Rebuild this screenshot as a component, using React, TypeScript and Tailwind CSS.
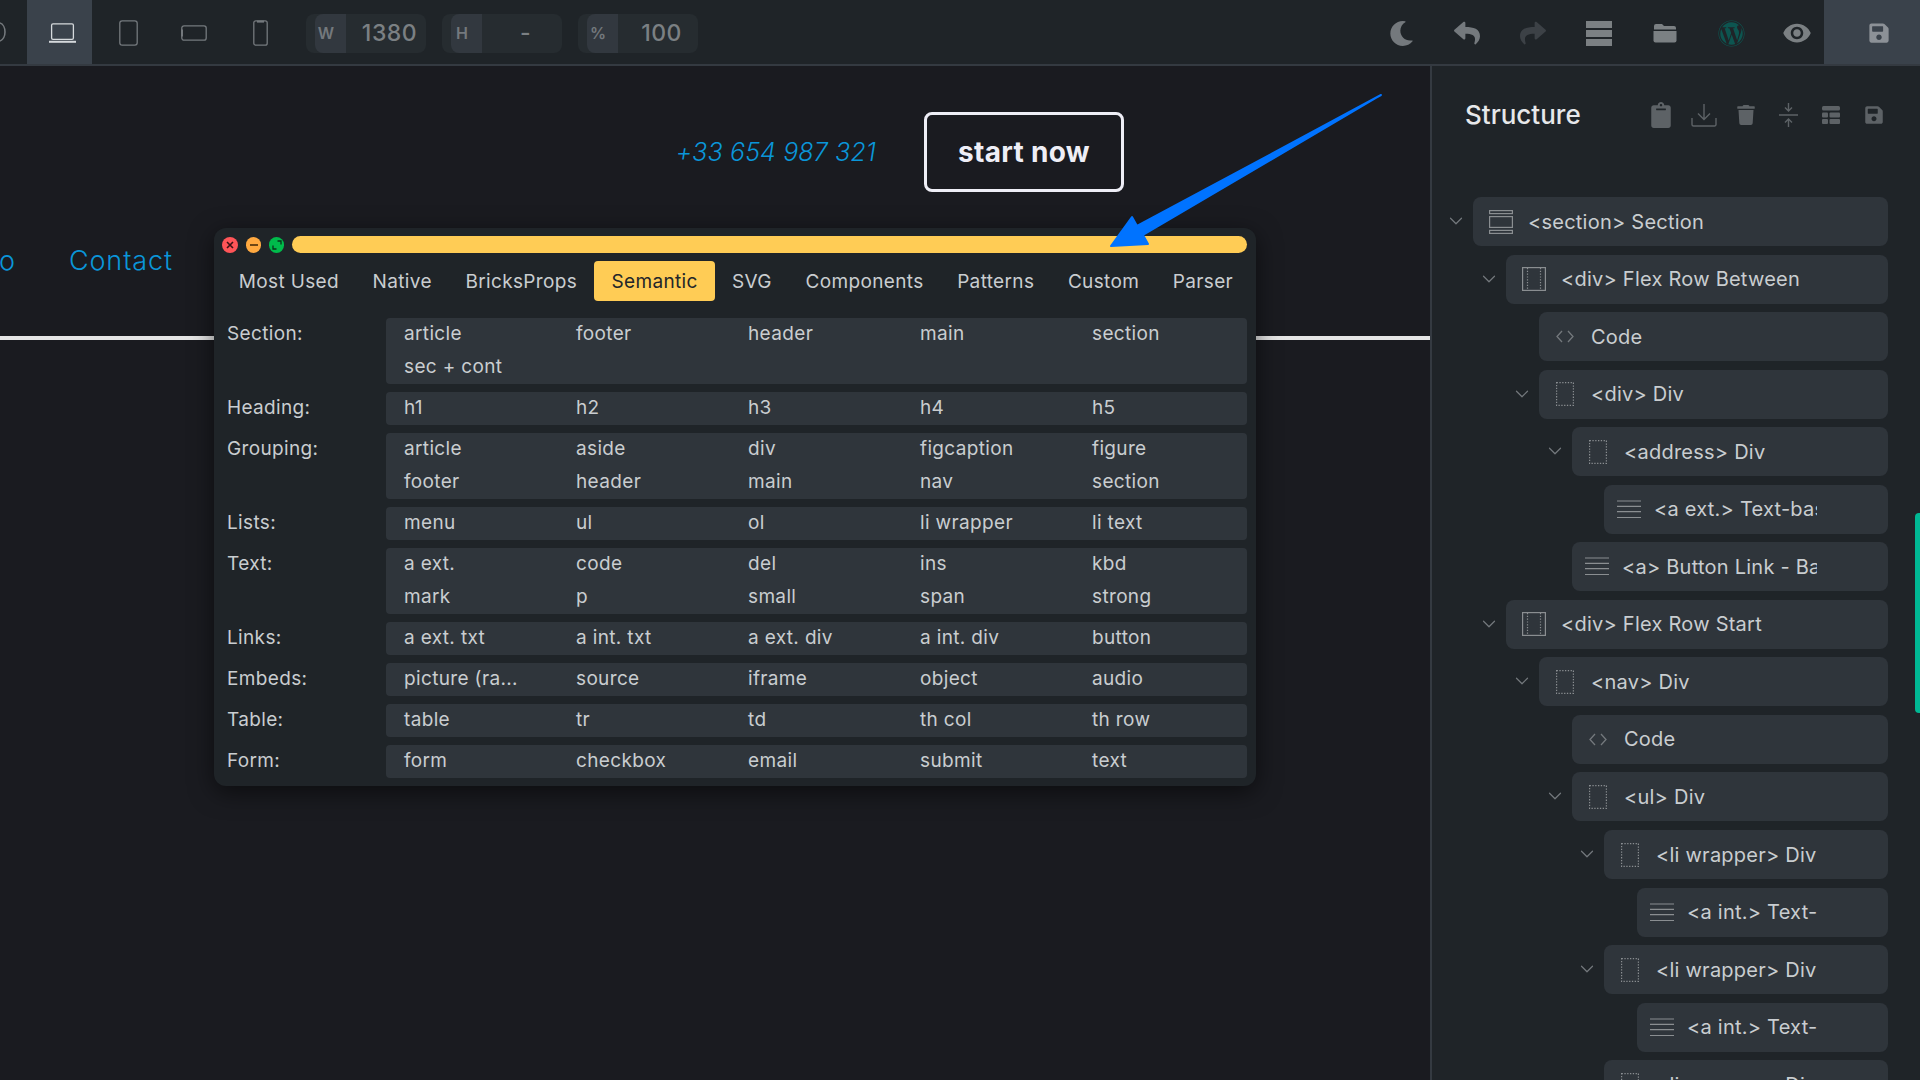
import { ChevronDown } from 'lucide-react';
import { FaMoon, FaReply, FaShare, FaWordpress, FaClipboard, FaTrash, FaSave } from 'react-icons/fa';
import { MdVisibility } from 'react-icons/md';

const FONT = "font-['Inter','Liberation_Sans',sans-serif]";

const TABS = ['Most Used', 'Native', 'BricksProps', 'Semantic', 'SVG', 'Components', 'Patterns', 'Custom', 'Parser'];

const GROUPS: { label: string; items: string[] }[] = [
  { label: 'Section:', items: ['article', 'footer', 'header', 'main', 'section', 'sec + cont'] },
  { label: 'Heading:', items: ['h1', 'h2', 'h3', 'h4', 'h5'] },
  { label: 'Grouping:', items: ['article', 'aside', 'div', 'figcaption', 'figure', 'footer', 'header', 'main', 'nav', 'section'] },
  { label: 'Lists:', items: ['menu', 'ul', 'ol', 'li wrapper', 'li text'] },
  { label: 'Text:', items: ['a ext.', 'code', 'del', 'ins', 'kbd', 'mark', 'p', 'small', 'span', 'strong'] },
  { label: 'Links:', items: ['a ext. txt', 'a int. txt', 'a ext. div', 'a int. div', 'button'] },
  { label: 'Embeds:', items: ['picture (ra...', 'source', 'iframe', 'object', 'audio'] },
  { label: 'Table:', items: ['table', 'tr', 'td', 'th col', 'th row'] },
  { label: 'Form:', items: ['form', 'checkbox', 'email', 'submit', 'text'] },
];

type RowIcon = 'section' | 'flex' | 'code' | 'div' | 'text';

const TREE: { level: number; icon: RowIcon; text: string; open?: boolean }[] = [
  { level: 0, icon: 'section', text: '<section> Section', open: true },
  { level: 1, icon: 'flex', text: '<div> Flex Row Between', open: true },
  { level: 2, icon: 'code', text: 'Code' },
  { level: 2, icon: 'div', text: '<div> Div', open: true },
  { level: 3, icon: 'div', text: '<address> Div', open: true },
  { level: 4, icon: 'text', text: '<a ext.> Text-basic' },
  { level: 3, icon: 'text', text: '<a> Button Link - Basic' },
  { level: 1, icon: 'flex', text: '<div> Flex Row Start', open: true },
  { level: 2, icon: 'div', text: '<nav> Div', open: true },
  { level: 3, icon: 'code', text: 'Code' },
  { level: 3, icon: 'div', text: '<ul> Div', open: true },
  { level: 4, icon: 'div', text: '<li wrapper> Div', open: true },
  { level: 5, icon: 'text', text: '<a int.> Text-basic' },
  { level: 4, icon: 'div', text: '<li wrapper> Div', open: true },
  { level: 5, icon: 'text', text: '<a int.> Text-basic' },
  { level: 4, icon: 'div', text: '<li wrapper> Div', open: true },
];

// indent per tree level, read off the reference
const INDENT = ['ml-0', 'ml-[33px]', 'ml-[66px]', 'ml-[99px]', 'ml-[131px]', 'ml-[164px]'];

// icon slot differs per element type
const ICON_SLOT: Record<RowIcon, string> = {
  section: 'w-[55px] pl-[16px]',
  flex: 'w-[55px] pl-[16px]',
  code: 'w-[52px] pl-[17px]',
  div: 'w-[52px] pl-[17px]',
  text: 'w-[50px] pl-[13px]',
};

function DeviceIcon({ kind }: { kind: 'laptop' | 'tablet' | 'landscape' | 'phone' }) {
  if (kind === 'laptop') {
    return (
      <svg width="27" height="20" viewBox="0 0 27 20" fill="none" stroke="#d5d9dc" strokeWidth="1.3">
        <rect x="2.6" y="0.8" width="21.8" height="15.6" rx="1.4" />
        <path d="M0 18.8h27" strokeWidth="2" />
      </svg>
    );
  }
  if (kind === 'tablet') {
    return (
      <svg width="19" height="26" viewBox="0 0 19 26" fill="none" stroke="#74797d" strokeWidth="1.3">
        <rect x="0.8" y="0.8" width="17.4" height="24.4" rx="2.4" />
      </svg>
    );
  }
  if (kind === 'landscape') {
    return (
      <svg width="26" height="16" viewBox="0 0 26 16" fill="none" stroke="#74797d" strokeWidth="1.3">
        <rect x="0.8" y="0.8" width="24.4" height="14.4" rx="2.2" />
        <path d="M1 4.500v7" strokeWidth="2" />
      </svg>
    );
  }
  return (
    <svg width="15" height="26" viewBox="0 0 15 26" fill="none" stroke="#74797d" strokeWidth="1.3">
      <rect x="0.8" y="0.8" width="13.4" height="24.4" rx="2" />
      <path d="M4 1.600h7" strokeWidth="2" />
    </svg>
  );
}

function SizeField({ label, value }: { label: string; value: string }) {
  return (
    <div className="flex h-[39px] w-[120px] rounded-lg bg-[#262c30] pl-[9px]">
      <span className="flex w-[31px] items-center justify-center rounded-l-lg bg-[#32383f] pr-[9px] text-[16px] font-semibold text-[#74797d]">{label}</span>
      <span className="flex flex-1 items-center justify-center pl-[7px] pt-[1px] text-[23px] font-medium tracking-[0.5px] text-[#7b8083]">{value}</span>
    </div>
  );
}

function TreeIcon({ kind }: { kind: RowIcon }) {
  if (kind === 'section') {
    return (
      <svg width="24" height="24" viewBox="0 0 24 24" fill="none" stroke="#8a8e91" strokeWidth="1.2">
        <rect x="0.6" y="0.6" width="22.8" height="3" />
        <rect x="0.6" y="6.6" width="22.8" height="10.8" />
        <rect x="0.6" y="20.4" width="22.8" height="3" />
      </svg>
    );
  }
  if (kind === 'flex') {
    return (
      <svg width="24" height="24" viewBox="0 0 24 24" fill="none" stroke="#8a8e91" strokeWidth="1.2">
        <rect x="0.6" y="0.6" width="22.8" height="22.8" />
        <path d="M5.500 1v22M18.500 1v22" strokeDasharray="1.2 1.6" />
      </svg>
    );
  }
  if (kind === 'code') {
    return (
      <svg width="18" height="13" viewBox="0 0 18 13" fill="none" stroke="#74797d" strokeWidth="1.3">
        <path d="M6 1 1 6.500 6 12M12 1l5 5.500L12 12" />
      </svg>
    );
  }
  if (kind === 'div') {
    return (
      <svg width="18" height="24" viewBox="0 0 18 24" fill="none" stroke="#8a8e91" strokeWidth="1.2">
        <rect x="0.6" y="0.6" width="16.8" height="22.8" strokeDasharray="1.3 1.5" />
      </svg>
    );
  }
  return (
    <svg width="24" height="19" viewBox="0 0 24 19" fill="none" stroke="#8a8e91" strokeWidth="1.2">
      <path d="M0 1h24M0 6.300h24M0 11.600h24M0 17.500h24" />
    </svg>
  );
}

function TreeRow({ level, icon, text, open }: { level: number; icon: RowIcon; text: string; open?: boolean }) {
  return (
    <div className={`relative flex h-[49px] shrink-0 items-center rounded-lg bg-[#2f353b] ${INDENT[level]}`}>
      {open && (
        <ChevronDown size={22} strokeWidth={1.3} className="absolute left-[-28px] top-[13px] text-[#74797d]" />
      )}
      <span className={`flex shrink-0 ${ICON_SLOT[icon]}`}>
        <TreeIcon kind={icon} />
      </span>
      <span className="mr-[71px] flex-1 overflow-hidden whitespace-nowrap text-[20px] tracking-[0.24px] text-[#c9cdd0]">{text}</span>
    </div>
  );
}

export default function App() {
  return (
    <div className={`${FONT} flex h-screen w-full flex-col overflow-hidden bg-[#1a1b20]`}>
      {/* Top toolbar */}
      <header className="flex h-[66px] shrink-0 items-stretch border-b-2 border-[#343a41] bg-[#1f2428]">
        <div className="flex w-[27px] items-center">
          <svg width="6" height="20" viewBox="0 0 6 20" fill="none" stroke="#74797d" strokeWidth="1.6">
            <path d="M0 1c3 1 5 5 5 9s-2 8-5 9" />
          </svg>
        </div>
        <div className="flex w-[65px] items-center justify-center bg-[#3a424b] pl-[6px] pt-[2px]">
          <DeviceIcon kind="laptop" />
        </div>
        <div className="ml-[3px] flex w-[66px] items-center justify-center pt-[2px]"><DeviceIcon kind="tablet" /></div>
        <div className="flex w-[66px] items-center justify-center pt-[2px]"><DeviceIcon kind="landscape" /></div>
        <div className="flex w-[66px] items-center justify-center pt-[2px]"><DeviceIcon kind="phone" /></div>
        <div className="ml-[13px] flex items-center gap-[16px] pt-[2px]">
          <SizeField label="W" value="1380" />
          <SizeField label="H" value="-" />
          <SizeField label="%" value="100" />
        </div>
        <div className="ml-auto flex items-center pt-[2px]">
          <div className="flex w-[66px] justify-center"><FaMoon size={25} className="text-[#74797d]" /></div>
          <div className="flex w-[66px] justify-center"><FaReply size={26} className="text-[#74797d]" /></div>
          <div className="flex w-[66px] justify-center"><FaShare size={26} className="text-[#3c4146]" /></div>
          <div className="flex w-[66px] flex-col items-center gap-[2px]">
            <span className="h-[7px] w-[26px] bg-[#7b8083]" />
            <span className="h-[7px] w-[26px] bg-[#7b8083]" />
            <span className="h-[7px] w-[26px] bg-[#7b8083]" />
          </div>
          <div className="flex w-[66px] justify-center">
            <svg width="24" height="20" viewBox="0 0 24 20" fill="#7b8083">
              <path d="M1 3a2 2 0 0 1 2-2h6l2 2h10a2 2 0 0 1 2 2v1.500H1z" />
              <path d="M0.500 8h23v9.500a2 2 0 0 1-2 2h-19a2 2 0 0 1-2-2z" />
            </svg>
          </div>
          <div className="flex w-[66px] justify-center"><FaWordpress size={27} className="text-[#0d5550]" /></div>
          <div className="flex w-[60px] justify-center pl-[6px]"><MdVisibility size={30} className="text-[#7b8083]" /></div>
        </div>
        <div className="flex w-[96px] items-center justify-center bg-[#3a424b] pl-[14px] pt-[2px]">
          <FaSave size={22} className="text-[#8c9197]" />
        </div>
      </header>

      <div className="flex min-h-0 flex-1">
        {/* Canvas */}
        <main className="relative w-[1430px] shrink-0 overflow-hidden">
          <div className="flex items-center justify-end pr-[306px] pt-[46px]">
            <span className="pt-[2px] text-[25px] font-light italic tracking-[0.15px] text-[#0a96d9]">+33 654 987 321</span>
            <button className="ml-[48px] h-[80px] w-[200px] rounded-lg border-[3px] border-[#eeeef6] text-[28px] font-bold tracking-[0.3px] text-[#eeeef6]">start now</button>
          </div>
          <nav className="mt-[49px] flex items-center text-[27px] font-light tracking-[0.9px] text-[#0a96d9]">
            <span className="-ml-[1px]">o</span>
            <span className="ml-[53px]">Contact</span>
          </nav>
          <div className="mt-[54px] h-[4px] bg-[#e5e5e5]" />

          {/* Floating element picker */}
          <div className="absolute left-[214px] top-[162px] flex w-[1042px] flex-col rounded-xl bg-[#1f2428] pb-[8px] pl-[13px] pr-[9px] pt-[8px] shadow-[0_6px_24px_rgba(0,0,0,0.55)]">
            <div className="flex items-center">
              <span className="-ml-[5px] flex h-[16px] w-[16px] items-center justify-center rounded-full bg-[#ff5558] text-[#3a1215]">
                <svg width="8" height="8" viewBox="0 0 8 8" stroke="currentColor" strokeWidth="1.6"><path d="M1 1l6 6M7 1 1 7" /></svg>
              </span>
              <span className="ml-[8px] flex h-[16px] w-[15px] items-center justify-center rounded-full bg-[#ffa940] text-[#4a2d0a]">
                <svg width="10" height="4" viewBox="0 0 10 4" stroke="currentColor" strokeWidth="1.6"><path d="M1 2h8" /></svg>
              </span>
              <span className="ml-[8px] flex h-[16px] w-[15px] items-center justify-center rounded-full bg-[#00bb4b] text-[#07351a]">
                <svg width="10" height="10" viewBox="0 0 10 10" fill="none" stroke="currentColor" strokeWidth="1.3"><path d="M5.500 1H9v3.500M4.500 9H1V5.500" /></svg>
              </span>
              <span className="ml-[8px] h-[17px] flex-1 rounded-full bg-[#ffcc55]" />
            </div>

            <div className="-ml-[5px] mt-[8px] flex h-[40px] items-center text-[19px] tracking-[0.35px] text-[#c9cdd0]">
              {TABS.map((tab) => (
                <span
                  key={tab}
                  className={`flex h-[40px] shrink-0 items-center whitespace-nowrap rounded pt-[2px] ${tab === 'Semantic' ? 'bg-[#ffcc55] px-[17.5px] text-[#22262a]' : 'px-[16.8px]'}`}
                >
                  {tab}
                </span>
              ))}
            </div>

            <div className="mt-[17px] flex flex-col gap-[8px] text-[19px] tracking-[0.35px] text-[#c9cdd0]">
              {GROUPS.map((group) => (
                <div key={group.label} className="flex">
                  <span className="flex h-[33px] w-[159px] shrink-0 items-center">{group.label}</span>
                  <div className="grid min-w-0 flex-1 grid-cols-[172px_172px_172px_172px_1fr] rounded bg-[#2f353b] pl-[18px]">
                    {group.items.map((item, i) => (
                      <span key={i} className="flex h-[33px] items-center whitespace-nowrap">{item}</span>
                    ))}
                  </div>
                </div>
              ))}
            </div>
          </div>

          {/* Blue annotation arrow */}
          <svg className="absolute left-[1100px] top-[20px]" width="300" height="170" viewBox="1100 86 300 170">
            <path
              d="M1381 95 1137 226 1132 217 1111 246 1148 244 1143 235Z"
              fill="#0073ff"
              stroke="#0073ff"
              strokeWidth="2"
              strokeLinejoin="round"
            />
          </svg>
        </main>

        {/* Structure panel */}
        <aside className="relative min-w-0 flex-1 border-l-2 border-[#343a41] bg-[#1f2428]">
          <div className="flex h-[131px] items-start justify-between pl-[33px] pr-[25px] pt-[33px]">
            <h2 className="text-[26px] font-medium leading-[32px] text-[#e6e8ea]">Structure</h2>
            <div className="flex h-[32px] items-center text-[#5d6266]">
              <span className="flex w-[42.5px] justify-center"><FaClipboard size={26} /></span>
              <span className="flex w-[42.5px] justify-center">
                <svg width="26" height="24" viewBox="0 0 26 24" fill="none" stroke="currentColor" strokeWidth="1.4">
                  <path d="M13 1v15M7 10.500l6 6 6-6M1 15v6.500A1.500 1.500 0 0 0 2.500 23h21a1.500 1.500 0 0 0 1.500-1.500V15" />
                </svg>
              </span>
              <span className="flex w-[42.5px] justify-center"><FaTrash size={20} /></span>
              <span className="flex w-[42.5px] justify-center">
                <svg width="19" height="24" viewBox="0 0 19 24" fill="none" stroke="currentColor" strokeWidth="1.4">
                  <path d="M0 12h19M9.500 0v8M6 4.500 9.500 8 13 4.500M9.500 24v-8M6 19.500 9.500 16l3.500 3.500" />
                </svg>
              </span>
              <span className="flex w-[42.5px] justify-center">
                <svg width="18" height="18" viewBox="0 0 18 18" fill="currentColor">
                  <rect x="0" y="0" width="18" height="4.500" rx="1.500" />
                  <rect x="0" y="6.500" width="6" height="5" rx="1" />
                  <rect x="7.500" y="6.500" width="10.500" height="5" rx="1" />
                  <rect x="0" y="13" width="6" height="5" rx="1" />
                  <rect x="7.500" y="13" width="10.500" height="5" rx="1" />
                </svg>
              </span>
              <span className="flex w-[42.5px] justify-center"><FaSave size={20} /></span>
            </div>
          </div>

          <div className="ml-[41px] mr-[32px] flex flex-col gap-[8.55px]">
            {TREE.map((row, i) => (
              <TreeRow key={i} level={row.level} icon={row.icon} text={row.text} open={row.open} />
            ))}
          </div>

          {/* Scroll thumb */}
          <div className="absolute right-0 top-[447px] h-[200px] w-[5px] rounded-l bg-[#00b894]" />
        </aside>
      </div>
    </div>
  );
}
